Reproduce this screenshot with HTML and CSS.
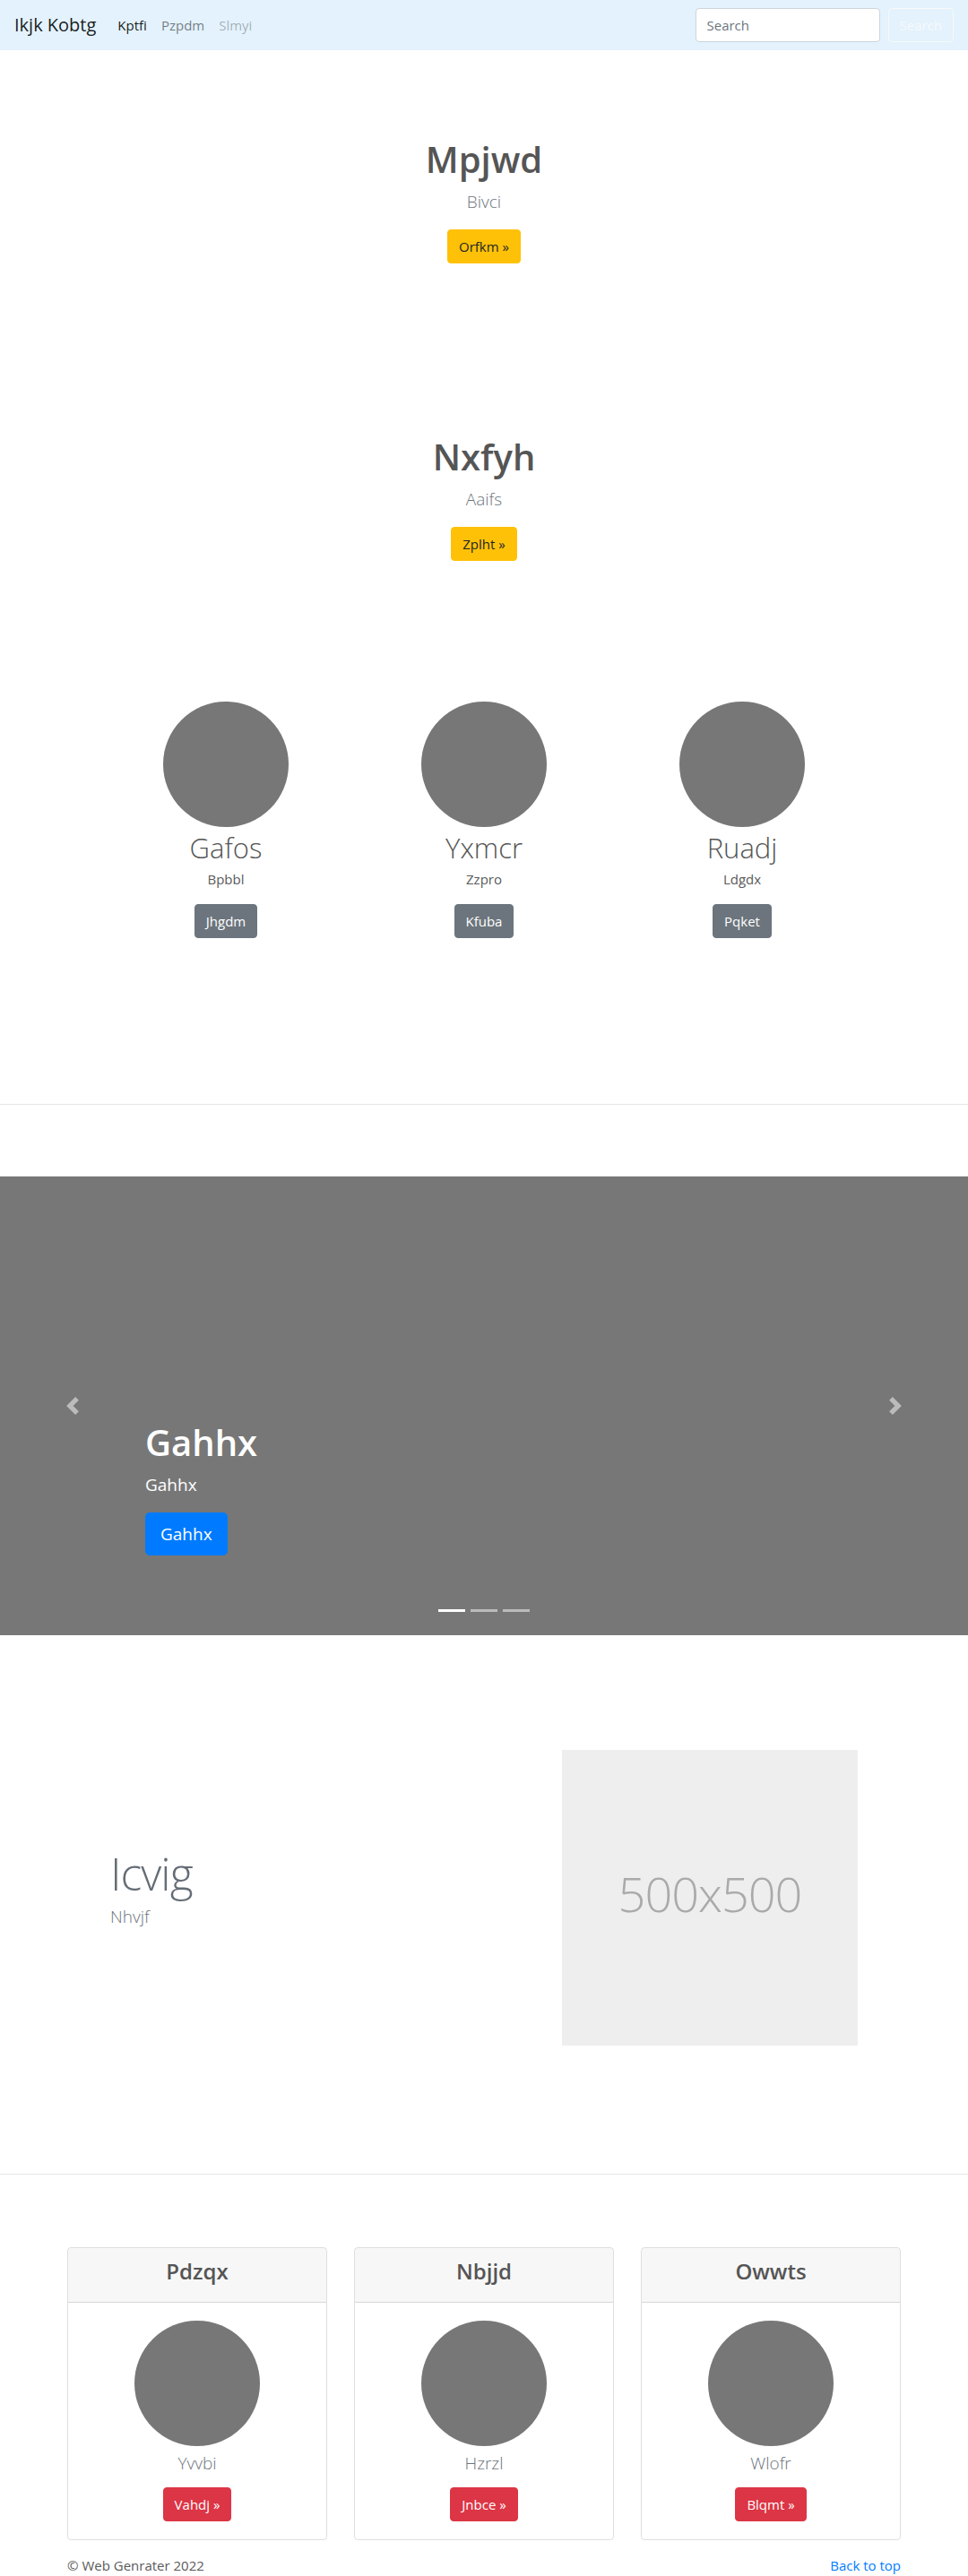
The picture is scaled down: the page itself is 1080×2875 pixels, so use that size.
FILE: index.html
```html
<!DOCTYPE html>
<html lang="en">
<head>
<meta charset="utf-8">
<title>Ikjk Kobtg</title>
<link rel="stylesheet" href="styles.css">
</head>
<body>
<nav class="navbar">
  <a class="brand" href="#">Ikjk Kobtg</a>
  <ul class="nav-links">
    <li><a class="nav-link active" href="#">Kptfi</a></li>
    <li><a class="nav-link" href="#">Pzpdm</a></li>
    <li><a class="nav-link disabled" href="#">Slmyi</a></li>
  </ul>
  <form class="search-form">
    <input class="search-input" type="text" placeholder="Search">
    <button class="btn btn-outline-light" type="button">Search</button>
  </form>
</nav>

<section class="hero hero-first">
  <h1 class="hero-title">Mpjwd</h1>
  <p class="hero-lead">Bivci</p>
  <a class="btn btn-warning" href="#">Orfkm &raquo;</a>
</section>

<section class="hero hero-second">
  <h1 class="hero-title">Nxfyh</h1>
  <p class="hero-lead">Aaifs</p>
  <a class="btn btn-warning" href="#">Zplht &raquo;</a>
</section>

<section class="features">
  <div class="feature">
    <div class="circle"></div>
    <h2 class="feature-name">Gafos</h2>
    <p class="feature-text">Bpbbl</p>
    <a class="btn btn-secondary" href="#">Jhgdm</a>
  </div>
  <div class="feature">
    <div class="circle"></div>
    <h2 class="feature-name">Yxmcr</h2>
    <p class="feature-text">Zzpro</p>
    <a class="btn btn-secondary" href="#">Kfuba</a>
  </div>
  <div class="feature">
    <div class="circle"></div>
    <h2 class="feature-name">Ruadj</h2>
    <p class="feature-text">Ldgdx</p>
    <a class="btn btn-secondary" href="#">Pqket</a>
  </div>
</section>

<hr class="divider">

<section class="carousel">
  <div class="carousel-caption">
    <h1 class="caption-title">Gahhx</h1>
    <p class="caption-text">Gahhx</p>
    <a class="btn btn-lg btn-primary" href="#">Gahhx</a>
  </div>
  <a class="carousel-control prev" href="#">
    <svg class="control-icon" viewBox="0 0 8 8" width="20" height="20"><path fill="#fff" d="M5.25 0l-4 4 4 4 1.5-1.5L4.25 4l2.5-2.5L5.25 0z"/></svg>
  </a>
  <a class="carousel-control next" href="#">
    <svg class="control-icon" viewBox="0 0 8 8" width="20" height="20"><path fill="#fff" d="M2.75 0l-1.5 1.5L3.75 4l-2.5 2.5L2.75 8l4-4-4-4z"/></svg>
  </a>
  <ol class="indicators">
    <li class="active"></li>
    <li></li>
    <li></li>
  </ol>
</section>

<section class="featurette">
  <div class="featurette-text">
    <h2 class="featurette-heading">Icvig</h2>
    <p class="featurette-lead">Nhvjf</p>
  </div>
  <div class="featurette-media">
    <div class="placeholder">500x500</div>
  </div>
</section>

<hr class="divider divider-second">

<section class="card-deck">
  <div class="card">
    <div class="card-header"><h4 class="card-title">Pdzqx</h4></div>
    <div class="card-body">
      <div class="circle"></div>
      <p class="card-name">Yvvbi</p>
      <a class="btn btn-danger" href="#">Vahdj &raquo;</a>
    </div>
  </div>
  <div class="card">
    <div class="card-header"><h4 class="card-title">Nbjjd</h4></div>
    <div class="card-body">
      <div class="circle"></div>
      <p class="card-name">Hzrzl</p>
      <a class="btn btn-danger" href="#">Jnbce &raquo;</a>
    </div>
  </div>
  <div class="card">
    <div class="card-header"><h4 class="card-title">Owwts</h4></div>
    <div class="card-body">
      <div class="circle"></div>
      <p class="card-name">Wlofr</p>
      <a class="btn btn-danger" href="#">Blqmt &raquo;</a>
    </div>
  </div>
</section>

<footer class="footer">
  <p class="copyright">&copy; Web Genrater 2022</p>
  <a class="back-top" href="#">Back to top</a>
</footer>
</body>
</html>
```

FILE: styles.css
```css
* { box-sizing: border-box; }

body {
  margin: 0;
  font-family: "Open Sans", "Noto Sans", "DejaVu Sans", sans-serif;
  font-size: 16px;
  line-height: 1.5;
  color: #5a5a5a;
  background: #fff;
}

/* ---------- navbar ---------- */
.navbar {
  display: flex;
  align-items: center;
  height: 56px;
  padding: 0 16px;
  background: #e3f2fd;
}
.brand {
  font-size: 20px;
  line-height: 30px;
  color: rgba(0, 0, 0, .9);
  text-decoration: none;
  margin-right: 16px;
}
.nav-links {
  display: flex;
  flex: 1;
  list-style: none;
  margin: 0;
  padding: 0;
}
.nav-link {
  display: block;
  padding: 8px;
  font-size: 15px;
  color: rgba(0, 0, 0, .5);
  text-decoration: none;
}
.nav-link.active { color: rgba(0, 0, 0, .9); }
.nav-link.disabled { color: rgba(0, 0, 0, .3); }

.search-form {
  display: flex;
  align-items: center;
}
.search-input {
  width: 206px;
  height: 38px;
  margin-right: 9px;
  padding: 6px 12px;
  border: 1px solid #ced4da;
  border-radius: 4px;
  background: #fff;
  font: inherit;
  font-size: 15px;
  color: #495057;
}
.search-input::placeholder { color: #6c757d; }

/* ---------- buttons ---------- */
.btn {
  display: inline-block;
  padding: 6px 12px;
  font-family: inherit;
  font-size: 15px;
  line-height: 24px;
  border: 1px solid transparent;
  border-radius: 4px;
  text-decoration: none;
  cursor: pointer;
}
.btn-outline-light {
  background: transparent;
  color: #f8f9fa;
  border-color: #f8f9fa;
}
.btn-warning { background: #ffc107; border-color: #ffc107; color: #212529; }
.btn-secondary { background: #6c757d; border-color: #6c757d; color: #fff; }
.btn-primary { background: #007bff; border-color: #007bff; color: #fff; }
.btn-danger { background: #dc3545; border-color: #dc3545; color: #fff; }
.btn-lg {
  padding: 8px 16px;
  font-size: 19px;
  line-height: 30px;
  border-radius: 5px;
}

/* ---------- heroes ---------- */
.hero {
  text-align: center;
  padding: 98px 0 94px;
}
.hero-title {
  margin: 0 0 8px;
  font-size: 40px;
  line-height: 48px;
  font-weight: 600;
  color: #555;
}
.hero-lead {
  margin: 0 0 16px;
  font-size: 19px;
  line-height: 30px;
  font-weight: 300;
  color: #6c757d;
}

/* ---------- marketing circles ---------- */
.features {
  display: flex;
  width: 864px;
  margin: 0 auto;
  padding: 63px 0 185px;
}
.feature {
  flex: 1;
  text-align: center;
}
.circle {
  width: 140px;
  height: 140px;
  margin: 0 auto 4px;
  border-radius: 50%;
  background: #777;
}
.feature-name {
  margin: 0 0 4px;
  font-size: 31px;
  line-height: 38px;
  font-weight: 300;
  color: #555;
}
.feature-text {
  margin: 0 0 16px;
  font-size: 15px;
  line-height: 24px;
}

.divider {
  margin: 0;
  border: 0;
  border-top: 1px solid rgba(0, 0, 0, .1);
}

/* ---------- carousel ---------- */
.carousel {
  position: relative;
  display: flex;
  flex-direction: column;
  justify-content: flex-end;
  height: 512px;
  margin-top: 80px;
  padding: 0 15% 89px;
  background: #777;
  color: #fff;
}
.carousel-caption { display: flex; flex-direction: column; }
.caption-title {
  margin: 0 0 8px;
  font-size: 40px;
  line-height: 48px;
  font-weight: 600;
}
.caption-text {
  margin: 0 0 16px;
  font-size: 19px;
  line-height: 30px;
}
.carousel-caption .btn { align-self: flex-start; }

.carousel-control {
  position: absolute;
  top: 0;
  bottom: 0;
  width: 15%;
  display: flex;
  align-items: center;
  justify-content: center;
  opacity: .5;
}
.carousel-control.prev { left: 0; }
.carousel-control.next { right: 0; }
.control-icon { display: block; }

.indicators {
  position: absolute;
  left: 0;
  right: 0;
  bottom: 16px;
  display: flex;
  justify-content: center;
  margin: 0;
  padding: 0;
  list-style: none;
}
.indicators li {
  width: 30px;
  height: 3px;
  margin: 10px 3px;
  background: #fff;
  opacity: .5;
}
.indicators li.active { opacity: 1; }

/* ---------- featurette ---------- */
.featurette {
  display: flex;
  align-items: center;
  width: 864px;
  margin: 128px auto 0;
}
.featurette-text {
  flex: 0 0 504px;
  padding: 0 15px;
}
.featurette-heading {
  margin: 0 0 8px;
  font-size: 50px;
  line-height: 1;
  font-weight: 300;
  letter-spacing: -1px;
  color: #646c74;
}
.featurette-lead {
  margin: 0 0 16px;
  font-size: 19px;
  line-height: 30px;
  font-weight: 300;
  color: #6c757d;
}
.featurette-media {
  flex: 0 0 360px;
  padding: 0 15px;
}
.placeholder {
  display: flex;
  align-items: center;
  justify-content: center;
  width: 330px;
  height: 330px;
  padding-bottom: 10px;
  background: #eee;
  color: #aaa;
  font-size: 54px;
  font-weight: 300;
  letter-spacing: -1px;
}

.divider-second { margin-top: 143px; }

/* ---------- cards ---------- */
.card-deck {
  display: flex;
  gap: 30px;
  width: 930px;
  margin: 81px auto 0;
}
.card {
  flex: 1;
  border: 1px solid rgba(0, 0, 0, .125);
  border-radius: 4px;
  text-align: center;
  overflow: hidden;
}
.card-header {
  padding: 12px 20px;
  background: rgba(0, 0, 0, .03);
  border-bottom: 1px solid rgba(0, 0, 0, .125);
}
.card-title {
  margin: 0 0 8px;
  font-size: 24px;
  line-height: 28px;
  font-weight: 600;
  color: #555;
}
.card-body {
  padding: 20px;
}
.card-name {
  margin: 0 0 12px;
  font-size: 19px;
  line-height: 30px;
  font-weight: 300;
  color: #6c757d;
}

/* ---------- footer ---------- */
.footer {
  display: flex;
  justify-content: space-between;
  width: 930px;
  margin: 16px auto 0;
  line-height: 24px;
  font-size: 15px;
}
.copyright { margin: 0; }
.back-top {
  color: #007bff;
  text-decoration: none;
}
```
